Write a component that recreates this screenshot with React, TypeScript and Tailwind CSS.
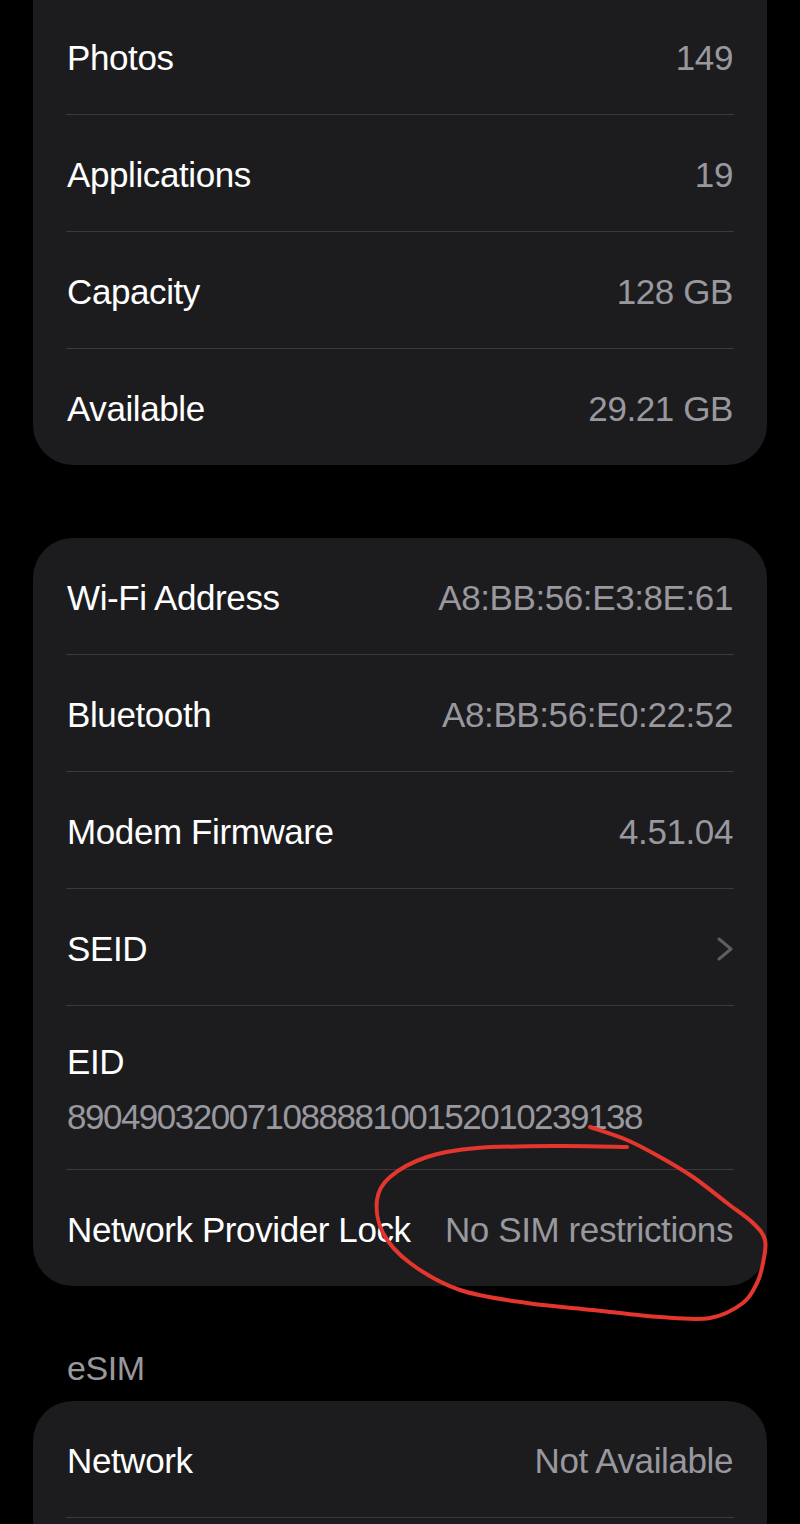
import type { ReactNode } from 'react';

type Row = { label: string; value?: string; chevron?: boolean };

const storage: Row[] = [
  { label: 'Photos', value: '149' },
  { label: 'Applications', value: '19' },
  { label: 'Capacity', value: '128 GB' },
  { label: 'Available', value: '29.21 GB' },
];

const network: Row[] = [
  { label: 'Wi-Fi Address', value: 'A8:BB:56:E3:8E:61' },
  { label: 'Bluetooth', value: 'A8:BB:56:E0:22:52' },
  { label: 'Modem Firmware', value: '4.51.04' },
  { label: 'SEID', chevron: true },
];

// hand-drawn circle round "No SIM restrictions"
const loop: [number, number][] = [
  [627, 1147], [560, 1146], [477, 1148], [427, 1157], [390, 1177], [377, 1200],
  [383, 1233], [410, 1263], [460, 1290], [527, 1303], [593, 1310], [660, 1317],
  [710, 1318], [743, 1303], [757, 1283], [763, 1263], [765, 1240], [753, 1223],
  [727, 1203], [693, 1177], [660, 1157], [627, 1140], [590, 1127],
];

function smoothPath(pts: [number, number][]) {
  let d = `M ${pts[0][0]} ${pts[0][1]}`;
  for (let i = 0; i < pts.length - 1; i++) {
    const p0 = pts[i - 1] || pts[i];
    const p1 = pts[i];
    const p2 = pts[i + 1];
    const p3 = pts[i + 2] || p2;
    const c1x = p1[0] + (p2[0] - p0[0]) / 6;
    const c1y = p1[1] + (p2[1] - p0[1]) / 6;
    const c2x = p2[0] - (p3[0] - p1[0]) / 6;
    const c2y = p2[1] - (p3[1] - p1[1]) / 6;
    d += ` C ${c1x} ${c1y} ${c2x} ${c2y} ${p2[0]} ${p2[1]}`;
  }
  return d;
}

function Divider() {
  return <div className="ml-[33px] mr-[33px] h-px bg-[#3a3a3c]" />;
}

function Chevron() {
  return (
    <svg width="16" height="24" viewBox="0 0 16 24">
      <polyline points="2,2 14,12 2,22" fill="none" stroke="#5d5d62" strokeWidth="3" strokeLinecap="round" strokeLinejoin="round" />
    </svg>
  );
}

function Line({ row }: { row: Row }) {
  return (
    <div className="flex h-[116px] items-center justify-between gap-5 px-[34px] pt-[3px]">
      <span className="whitespace-nowrap text-white">{row.label}</span>
      {row.chevron ? <Chevron /> : <span className="whitespace-nowrap text-[#98989e]">{row.value}</span>}
    </div>
  );
}

function Card({ children, className = '' }: { children: ReactNode; className?: string }) {
  return <div className={`mx-[33px] overflow-hidden rounded-[40px] bg-[#1c1c1e] ${className}`}>{children}</div>;
}

function Rows({ rows }: { rows: Row[] }) {
  return (
    <>
      {rows.map((r, i) => (
        <div key={r.label}>
          {i > 0 && <Divider />}
          <Line row={r} />
        </div>
      ))}
    </>
  );
}

export default function App() {
  return (
    <div
      className="relative h-[1524px] w-[800px] overflow-hidden bg-black text-[35px] leading-none tracking-[-0.4px]"
      style={{ fontFamily: '"Liberation Sans", Arial, sans-serif' }}
    >
      <Card className="-mt-[2px] rounded-t-none">
        <Rows rows={storage} />
      </Card>

      <Card className="mt-[73px]">
        <Rows rows={network} />
        <Divider />
        <div className="flex h-[163px] flex-col justify-center gap-[20px] px-[34px] pt-[2px]">
          <span className="text-white">EID</span>
          <span className="tracking-[-1.5px] text-[#98989e]">89049032007108888100152010239138</span>
        </div>
        <Divider />
        <Line row={{ label: 'Network Provider Lock', value: 'No SIM restrictions' }} />
      </Card>

      <div className="px-[67px] pb-[16px] pt-[65px] text-[34px] text-[#98989e]">eSIM</div>

      <Card>
        <Line row={{ label: 'Network', value: 'Not Available' }} />
        <Divider />
        <div className="h-[116px]" />
      </Card>

      <svg className="pointer-events-none absolute left-0 top-0" width="800" height="1524" viewBox="0 0 800 1524">
        <path d={smoothPath(loop)} fill="none" stroke="#e5362e" strokeWidth="4" strokeLinecap="round" strokeLinejoin="round" />
      </svg>
    </div>
  );
}
